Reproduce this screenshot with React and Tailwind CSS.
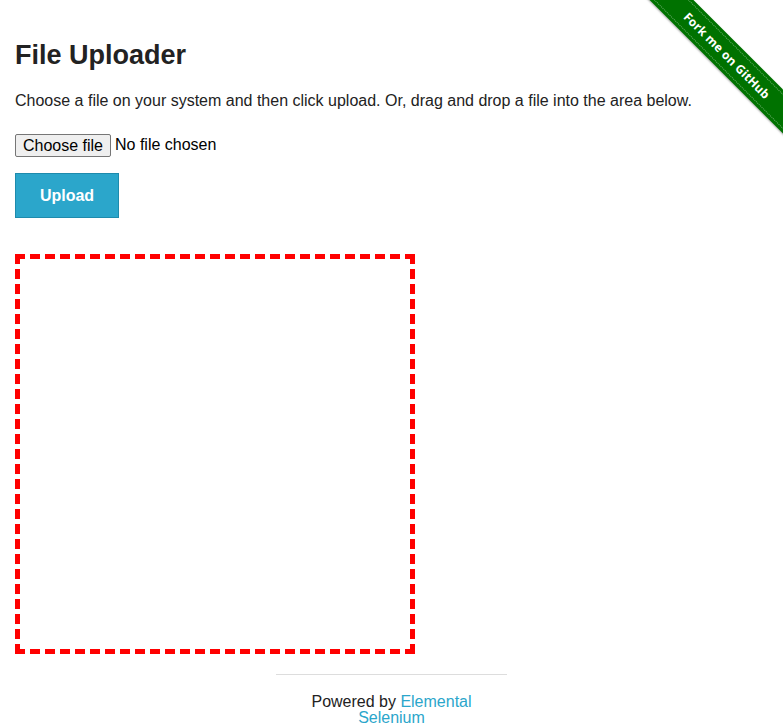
const ForkRibbon = () => (
  <div className="absolute top-0 right-0 w-[149px] h-[149px] overflow-hidden pointer-events-none">
    <div className="absolute left-[-17px] top-[40px] w-[220px] h-[31px] rotate-45 bg-[#007200] shadow-[0_1px_2px_rgba(0,0,0,0.35)] flex items-center">
      <div className="w-full h-[25px] border-y border-dotted border-white/40 flex items-center justify-center">
        <span className="text-white text-[12px] font-bold tracking-[0.2px] leading-none [font-family:'Open_Sans','Liberation_Sans',sans-serif]">
          Fork me on GitHub
        </span>
      </div>
    </div>
  </div>
);

const App = () => {
  return (
    <div className="relative min-h-[726px] bg-white text-[#222] font-['Liberation_Sans',Arial,sans-serif]">
      <ForkRibbon />

      <div className="px-[15px] pt-[39px]">
        <h3 className="text-[27px] font-bold leading-[32px]">File Uploader</h3>
        <p className="mt-[17px] text-[16px] leading-[25.6px]">
          Choose a file on your system and then click upload. Or, drag and drop a file into the area below.
        </p>

        <div className="mt-[20px] flex items-center h-[23px] text-[16px]">
          <button className="w-[96px] h-[23px] border border-[#767676] rounded-[2px] bg-[#efefef] text-[16px] leading-[19px] text-black">
            Choose file
          </button>
          <span className="ml-[4px] text-black">No file chosen</span>
        </div>

        <button className="mt-[16px] block w-[104px] h-[45px] pt-[2px] bg-[#2ba6cb] border border-[#1e8bad] text-white font-bold text-[16px]">
          Upload
        </button>

        <div className="mt-[36px] w-[400px] h-[400px] border-[5px] border-dashed border-[#f00]"></div>
      </div>

      <div className="mt-[20px] flex flex-col items-center">
        <hr className="w-[231px] border-0 border-t border-[#ddd]" />
        <div className="mt-[19px] text-center text-[16px] leading-[16px]">
          <div>
            Powered by <a href="#" className="text-[#2ba6cb]">Elemental</a>
          </div>
          <div>
            <a href="#" className="text-[#2ba6cb]">Selenium</a>
          </div>
        </div>
      </div>
    </div>
  );
};

export default App;
